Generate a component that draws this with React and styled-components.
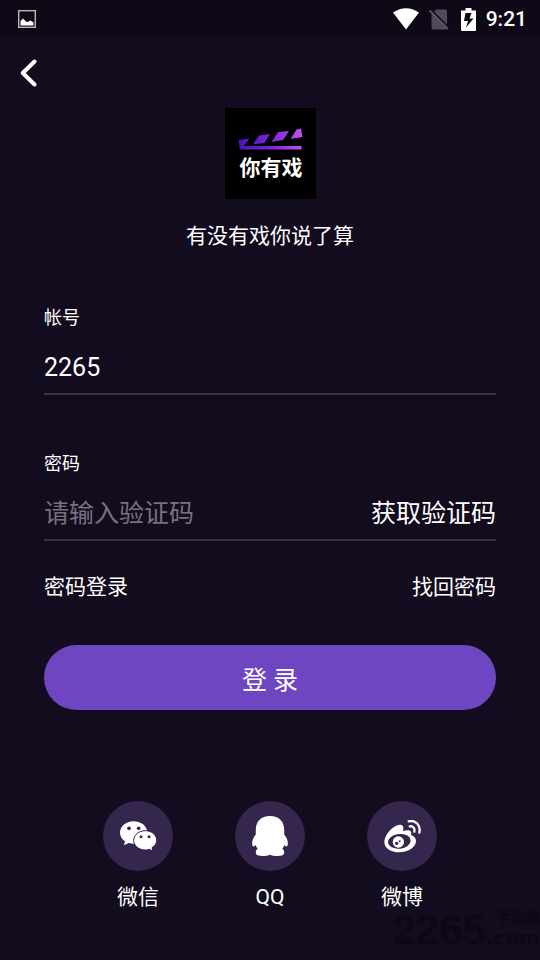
import React from "react";
import styled, { createGlobalStyle } from "styled-components";

const GlobalStyle = createGlobalStyle`
  * {
    box-sizing: border-box;
  }
  body {
    margin: 0;
    background: #130b1e;
    color: #fff;
    font-family: Roboto, "Noto Sans CJK SC", sans-serif;
  }
  button,
  input {
    margin: 0;
    padding: 0;
    border: 0;
    background: none;
    color: inherit;
    font-family: inherit;
  }
  svg {
    display: block;
  }
`;

const Page = styled.div`
  position: relative;
  min-height: 100vh;
  overflow: hidden;
`;

const StatusBar = styled.div`
  display: flex;
  align-items: center;
  justify-content: space-between;
  height: 38px;
  padding: 0 13px 0 18px;
  background: #0f0917;
`;

const StatusGroup = styled.div`
  display: flex;
  align-items: center;
  gap: 10px;
`;

const Time = styled.span`
  font-size: 21px;
  font-weight: 500;
  line-height: 24px;
`;

const NavBar = styled.header`
  display: flex;
  align-items: center;
  height: 70px;
  padding: 0 20px;
`;

const BackButton = styled.button`
  cursor: pointer;
`;

const Main = styled.main`
  display: flex;
  flex-direction: column;
  padding: 0 44px 48px;
`;

const Brand = styled.div`
  display: flex;
  flex-direction: column;
  align-items: center;
  gap: 22px;
`;

const Slogan = styled.p`
  margin: 0;
  font-size: 21px;
  line-height: 30px;
`;

const Form = styled.form`
  display: flex;
  flex-direction: column;
  gap: 57px;
  margin-top: 55px;
`;

const Field = styled.div`
  display: flex;
  flex-direction: column;
  gap: 12px;
`;

const Label = styled.label`
  font-size: 18px;
  line-height: 24px;
`;

const InputRow = styled.div`
  display: flex;
  align-items: center;
  height: 53px;
  border-bottom: 2px solid #3a3344;
`;

const Input = styled.input`
  flex: 1;
  min-width: 0;
  height: 51px;
  font-size: 25px;
  outline: none;
  &::placeholder {
    color: #77727d;
    opacity: 1;
  }
`;

const CodeButton = styled.button`
  font-size: 25px;
  line-height: 38px;
  cursor: pointer;
`;

const Actions = styled.div`
  display: flex;
  flex-direction: column;
  gap: 43px;
  margin-top: -26px;
`;

const Links = styled.div`
  display: flex;
  justify-content: space-between;
`;

const TextLink = styled.a`
  color: inherit;
  font-size: 21px;
  line-height: 30px;
  text-decoration: none;
`;

const LoginButton = styled.button`
  height: 65px;
  border-radius: 33px;
  background: #6e46c1;
  font-size: 25px;
  cursor: pointer;
`;

const Socials = styled.div`
  display: flex;
  justify-content: center;
  gap: 62px;
  margin-top: 91px;
`;

const SocialButton = styled.button`
  display: flex;
  flex-direction: column;
  align-items: center;
  gap: 11px;
  width: 70px;
  font-size: 21px;
  line-height: 30px;
  cursor: pointer;
`;

const Circle = styled.span`
  display: flex;
  align-items: center;
  justify-content: center;
  width: 70px;
  height: 70px;
  border-radius: 50%;
  background: #35264d;
`;

const Watermark = styled.div`
  position: absolute;
  right: 0;
  bottom: 10px;
  display: flex;
  align-items: center;
  color: #0d0815;
  font-family: "DejaVu Sans", "Noto Sans CJK SC", sans-serif;
  font-weight: bold;
  pointer-events: none;
`;

const WatermarkNumber = styled.span`
  font-family: "Liberation Sans", sans-serif;
  font-size: 42px;
  line-height: 40px;
`;

const WatermarkSide = styled.span`
  display: flex;
  flex-direction: column;
  align-items: flex-end;
  font-size: 20px;
  line-height: 24px;
`;

const WatermarkName = styled.span`
  font-size: 15px;
  line-height: 16px;
`;

const PictureIcon = () => (
  <svg width="18" height="18" viewBox="0 0 18 18" aria-hidden="true">
    <rect x="0.7" y="0.7" width="16.6" height="16.6" fill="none" stroke="#b9b6bd" strokeWidth="1.4" />
    <path d="M2.500 15.500v-4.500l2.500-2.500 3 3 1.500 0.500 3-1.500 3 2v3z" fill="#fff" />
  </svg>
);

const WifiIcon = () => (
  <svg width="26" height="22" viewBox="0 0 26 22" aria-hidden="true">
    <path d="M0 4.500Q13-4 26 4.500L13 21.500z" fill="#fff" />
  </svg>
);

const NoSimIcon = () => (
  <svg width="22" height="21" viewBox="0 0 22 21" aria-hidden="true">
    <path d="M7 0.500h9.500q1.500 0 1.500 1.500v17q0 1.500-1.500 1.500h-12Q2.500 20.500 2.500 19V5.500z" fill="#514b59" />
    <path d="M1.500 0.500l19 19" stroke="#0f0917" strokeWidth="2" />
    <path d="M0.500 1.500l18.500 18.500" stroke="#5c5664" strokeWidth="1.800" />
  </svg>
);

const BatteryIcon = () => (
  <svg width="15" height="23" viewBox="0 0 15 23" aria-hidden="true">
    <path d="M4.500 0h6v2.500H15V22q0 1-1 1H1q-1 0-1-1V2.500h4.500z" fill="#fff" />
    <path d="M10.500 5H4.500L3 13h4L5 19.500 12.500 10.500H8.500z" fill="#0f0917" />
  </svg>
);

const BackIcon = () => (
  <svg width="17" height="28" viewBox="0 0 17 28" aria-hidden="true">
    <path
      d="M14.500 2.500L2.800 14l11.700 11.500"
      fill="none"
      stroke="#fff"
      strokeWidth="4"
      strokeLinecap="round"
      strokeLinejoin="round"
    />
  </svg>
);

const Logo = () => (
  <svg width="91" height="91" viewBox="0 0 91 91" role="img" aria-label="你有戏">
    <defs>
      <linearGradient id="clapper" gradientUnits="userSpaceOnUse" x1="14" y1="0" x2="77" y2="0">
        <stop offset="0" stopColor="#4a14b8" />
        <stop offset="0.55" stopColor="#8126e0" />
        <stop offset="1" stopColor="#bd57e6" />
      </linearGradient>
    </defs>
    <rect width="91" height="91" fill="#000" />
    <g fill="url(#clapper)">
      <path d="M13.500 32l11-1.500-5.500 7.500H76.500v3.500H15z" />
      <path d="M28 36.500l6-9 11-1.500-5.500 9z" />
      <path d="M46.500 34l6.500-10 11-1-6 9z" />
      <path d="M65.500 31l6-9.500 4.500-1 1.500 8.500z" />
    </g>
    <text
      x="46"
      y="67"
      textAnchor="middle"
      fill="#fff"
      fontFamily='"Noto Sans CJK SC", sans-serif'
      fontSize="21"
      fontWeight="700"
    >
      你有戏
    </text>
  </svg>
);

const WechatIcon = () => (
  <svg width="37" height="30" viewBox="92 92 111 90" aria-hidden="true">
    <path
      d="M133 93c-23 0-41 15-41 34 0 11 6 20 15 26l-3 12 14-7c5 1 10 2 15 2 23 0 41-14 41-33s-18-34-41-34z"
      fill="#fff"
    />
    <path
      d="M168 121c-19 0-35 13-35 29s16 29 35 29c5 0 9-1 13-2l10 6-3-11c9-5 14-13 14-22 0-16-15-29-34-29z"
      fill="#fff"
      stroke="#35264d"
      strokeWidth="3"
    />
    <g fill="#35264d">
      <circle cx="119" cy="114" r="5.500" />
      <circle cx="148" cy="114" r="5.500" />
      <circle cx="155" cy="139" r="4.500" />
      <circle cx="179" cy="139" r="4.500" />
    </g>
  </svg>
);

const QqIcon = () => (
  <svg width="36" height="40" viewBox="96 77 108 121" aria-hidden="true">
    <path
      d="M150 77c-27 0-42 16-43 40v16c-7 9-11 17-11 27 0 6 2 9 4 9 3 0 5-2 7-4 1 5 3 8 6 11-4 3-6 6-6 11 0 8 5 11 19 11 11 0 19-2 24-4 5 2 13 4 24 4 14 0 19-3 19-11 0-5-2-8-6-11 3-3 5-6 6-11 2 2 4 4 7 4 2 0 4-3 4-9 0-10-4-18-11-27v-16c-1-24-16-40-43-40z"
      fill="#fff"
    />
  </svg>
);

const WeiboIcon = () => (
  <svg width="37" height="33" viewBox="83 91 111 99" aria-hidden="true">
    <path
      d="M132 105c-12-1-29 12-39 27-6 9-9 17-9 25 0 19 20 31 44 31 30 0 51-17 51-34 0-9-6-15-15-18 4-12-4-18-24-12 2-10 2-18-8-19z"
      fill="#fff"
    />
    <ellipse cx="129" cy="155" rx="34" ry="22" fill="#35264d" transform="rotate(-6 129 155)" />
    <circle cx="126" cy="157" r="17" fill="#fff" />
    <circle cx="121" cy="161" r="5" fill="#35264d" />
    <circle cx="130" cy="155" r="3" fill="#35264d" />
    <g fill="none" stroke="#fff" strokeWidth="7" strokeLinecap="round">
      <path d="M157 95c20-5 37 11 32 34" />
      <path d="M160 110c10-2 17 6 14 16" />
    </g>
  </svg>
);

const socials = [
  { name: "微信", Icon: WechatIcon },
  { name: "QQ", Icon: QqIcon },
  { name: "微博", Icon: WeiboIcon },
];

const App = () => {
  return (
    <Page>
      <GlobalStyle />
      <StatusBar>
        <PictureIcon />
        <StatusGroup>
          <WifiIcon />
          <NoSimIcon />
          <BatteryIcon />
          <Time>9:21</Time>
        </StatusGroup>
      </StatusBar>
      <NavBar>
        <BackButton type="button" aria-label="返回">
          <BackIcon />
        </BackButton>
      </NavBar>
      <Main>
        <Brand>
          <Logo />
          <Slogan>有没有戏你说了算</Slogan>
        </Brand>
        <Form onSubmit={(e) => e.preventDefault()}>
          <Field>
            <Label htmlFor="account">帐号</Label>
            <InputRow>
              <Input id="account" type="text" defaultValue="2265" />
            </InputRow>
          </Field>
          <Field>
            <Label htmlFor="code">密码</Label>
            <InputRow>
              <Input id="code" type="text" placeholder="请输入验证码" />
              <CodeButton type="button">获取验证码</CodeButton>
            </InputRow>
          </Field>
          <Actions>
            <Links>
              <TextLink href="#password">密码登录</TextLink>
              <TextLink href="#recover">找回密码</TextLink>
            </Links>
            <LoginButton type="submit">登 录</LoginButton>
          </Actions>
        </Form>
        <Socials>
          {socials.map(({ name, Icon }) => (
            <SocialButton key={name} type="button">
              <Circle>
                <Icon />
              </Circle>
              {name}
            </SocialButton>
          ))}
        </Socials>
      </Main>
      <Watermark>
        <WatermarkNumber>2265</WatermarkNumber>
        <WatermarkSide>
          <WatermarkName>手游网</WatermarkName>
          .com
        </WatermarkSide>
      </Watermark>
    </Page>
  );
};

export default App;
